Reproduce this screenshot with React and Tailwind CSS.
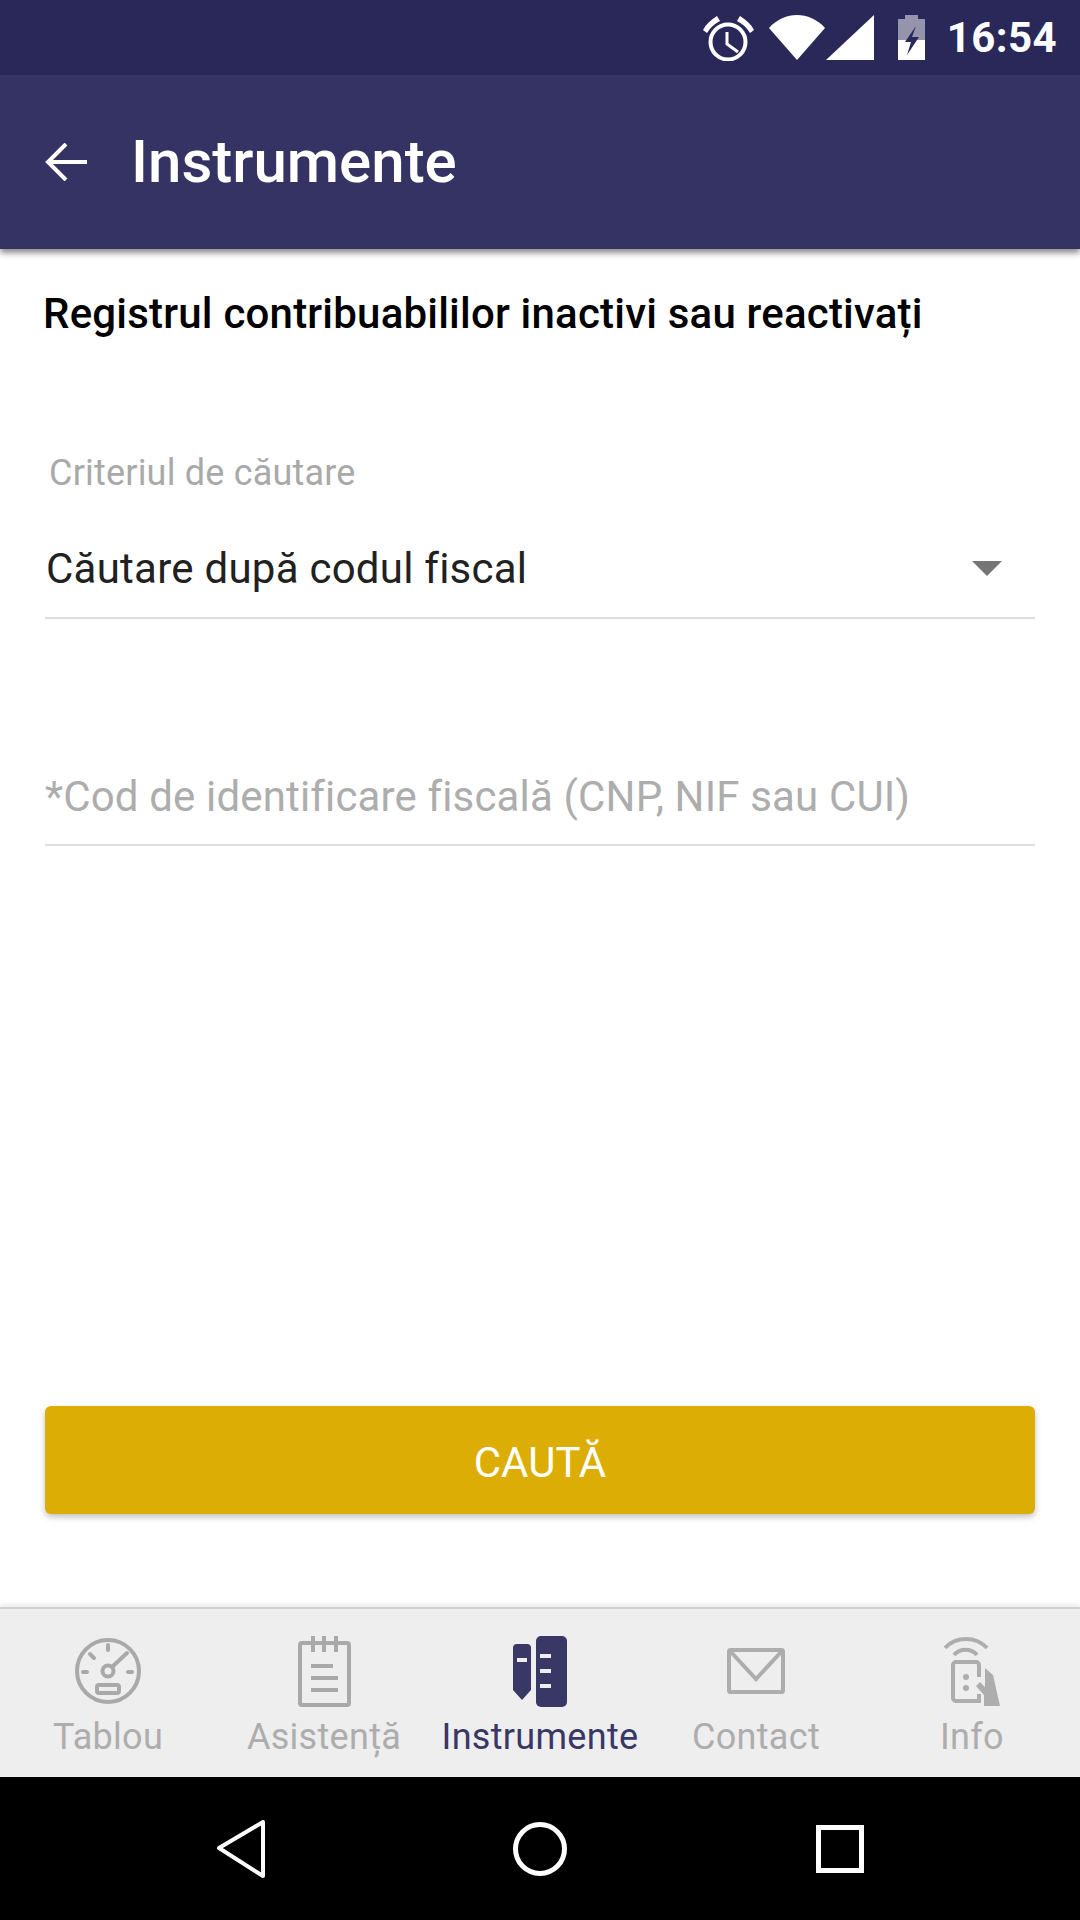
import React from 'react';

function AlarmIcon() {
  return (
    <svg width="51" height="46" viewBox="0 0 51 46" fill="none">
      <circle cx="25" cy="27" r="17.5" stroke="#fff" strokeWidth="4" />
      <path d="M24 17v12l11 8" stroke="#fff" strokeWidth="3" />
      <path d="M0 15C3 9 8 5 14 1l3 5C11 9 7 13 4 18z" fill="#fff" />
      <path d="M51 15C48 9 43 5 37 1l-3 5c6 3 10 7 13 12z" fill="#fff" />
    </svg>
  );
}

function WifiIcon() {
  return (
    <svg width="56" height="45" viewBox="0 0 56 45">
      <path d="M0 13C8 4 18 0 28 0s20 4 28 13L28 45z" fill="#fff" />
    </svg>
  );
}

function SignalIcon() {
  return (
    <svg width="48" height="45" viewBox="0 0 48 45">
      <path d="M0 45L48 0v45z" fill="#fff" />
    </svg>
  );
}

function BatteryIcon() {
  return (
    <svg width="27" height="45" viewBox="0 0 27 45">
      <path d="M0 4h7V0h13v4h7v21H0z" fill="#fff" fillOpacity="0.5" />
      <path d="M0 25h27v20H0z" fill="#fff" />
      <path d="M18 11L7 27h6L9 40l12-18h-7z" fill="#2a2859" />
    </svg>
  );
}

function GaugeIcon() {
  return (
    <svg width="68" height="68" viewBox="0 0 68 68" fill="none" stroke="#a9a9a9" strokeWidth="4">
      <circle cx="34" cy="34" r="31" />
      <circle cx="34" cy="34" r="5.5" />
      <path d="M38 30l15-14" strokeLinecap="round" />
      <path d="M34 8v5M16 17l4 4M9 35h4M54 35h4" strokeLinecap="round" />
      <rect x="23" y="48" width="22" height="8" rx="2" />
    </svg>
  );
}

function NotepadIcon() {
  return (
    <svg width="53" height="71" viewBox="0 0 53 71" fill="none" stroke="#a9a9a9" strokeWidth="4">
      <rect x="2" y="7" width="49" height="62" rx="2" />
      <path d="M15 0v16M26 0v16M38 0v16" />
      <path d="M13 30h22M13 42h27M13 54h27" />
    </svg>
  );
}

function ToolsIcon() {
  return (
    <svg width="54" height="71" viewBox="0 0 54 71">
      <path d="M4 8h10a4 4 0 014 4v42L9 64 0 54V12a4 4 0 014-4z" fill="#383766" />
      <rect x="23" y="0" width="31" height="71" rx="5" fill="#383766" />
      <path d="M4 22h10v4H4zM27 18h11v4H27zM27 33h11v4H27zM27 48h11v4H27z" fill="#eeeeee" />
    </svg>
  );
}

function MailIcon() {
  return (
    <svg width="58" height="46" viewBox="0 0 58 46" fill="none" stroke="#adadad" strokeWidth="4">
      <rect x="2" y="2" width="54" height="42" rx="1.5" />
      <path d="M3 3l26 28L55 3" />
    </svg>
  );
}

function InfoIcon() {
  return (
    <svg width="56" height="71" viewBox="0 0 56 71" fill="none" stroke="#adadad" strokeWidth="4">
      <path d="M1 12C12 0 32 0 43 12" />
      <path d="M10 19C16 12 27 12 33 19" />
      <path d="M35 41V29a3 3 0 00-3-3H12a3 3 0 00-3 3v33a3 3 0 003 3h23v-7" />
      <circle cx="22" cy="41" r="3" fill="#adadad" stroke="none" />
      <circle cx="22" cy="52" r="3" fill="#adadad" stroke="none" />
      <path d="M41 32l8 7 7 31H40V59l-8-9 4-4 5 5z" fill="#adadad" stroke="none" />
    </svg>
  );
}

function NavItem({ icon, label, active }) {
  return (
    <div className="flex-1 flex flex-col items-center">
      <div className="h-[72px] flex items-center justify-center">{icon}</div>
      <span className={`mt-[8px] text-[36px] leading-[44px] tracking-[0.3px] ${active ? 'text-[#383766]' : 'text-[#adadad]'}`}>{label}</span>
    </div>
  );
}

export default function App() {
  return (
    <div className="h-[1920px] w-[1080px] flex flex-col bg-white overflow-hidden font-['Roboto',sans-serif]">
      {/* status bar */}
      <div className="h-[75px] bg-[#2a2859] flex items-center justify-end pr-[23px]">
        <AlarmIcon />
        <div className="ml-[15px]"><WifiIcon /></div>
        <div className="ml-px"><SignalIcon /></div>
        <div className="ml-[24px]"><BatteryIcon /></div>
        <span className="ml-[22px] text-[42px] font-bold tracking-[0.4px] text-white leading-none">16:54</span>
      </div>

      {/* app bar */}
      <div className="relative h-[174px] bg-[#343364] flex items-center shadow-[0_4px_6px_rgba(0,0,0,0.45)]">
        <svg width="44" height="38" viewBox="0 0 44 38" fill="none" stroke="#fff" strokeWidth="4" className="ml-[45px]">
          <path d="M42 19H3M21 1L3 19l18 18" />
        </svg>
        <h1 className="ml-[42px] text-[60px] font-medium text-white leading-none">Instrumente</h1>
      </div>

      {/* form */}
      <div className="flex-1 flex flex-col px-[45px]">
        <h2 className="mt-[37px] -ml-[2px] text-[42px] leading-[56px] tracking-[0.2px] font-medium text-black">Registrul contribuabililor inactivi sau reactivați</h2>

        <label className="mt-[107px] ml-[4px] text-[36px] leading-[48px] tracking-[0.2px] text-[#a9a9a9]">Criteriul de căutare</label>
        <div className="mt-[40px] h-[82px] flex items-start justify-between border-b-2 border-[#dedede] pt-[4px]">
          <span className="ml-px text-[42px] leading-[56px] tracking-[0.25px] text-[#212121]">Căutare după codul fiscal</span>
          <span className="mt-[20px] mr-[33px] w-0 h-0 border-x-[15px] border-x-transparent border-t-[15px] border-t-[#757575]"></span>
        </div>

        <div className="mt-[134px] h-[93px] border-b-2 border-[#dedede] pt-[16px]">
          <span className="text-[42px] leading-[56px] tracking-[0.15px] text-[#adadad]">*Cod de identificare fiscală (CNP, NIF sau CUI)</span>
        </div>

        <button className="mt-auto mb-[93px] h-[108px] pt-[5px] rounded-[6px] bg-[#dcad05] text-white text-[42px] shadow-[0_3px_6px_rgba(0,0,0,0.25)]">CAUTĂ</button>
      </div>

      {/* bottom tabs */}
      <div className="h-[170px] bg-[#eeeeee] flex border-t-[2px] border-[#d0d0d0] pt-[26px] shadow-[0_-3px_5px_rgba(0,0,0,0.08)]">
        <NavItem icon={<GaugeIcon />} label="Tablou" />
        <NavItem icon={<NotepadIcon />} label="Asistență" />
        <NavItem icon={<ToolsIcon />} label="Instrumente" active />
        <NavItem icon={<MailIcon />} label="Contact" />
        <NavItem icon={<InfoIcon />} label="Info" />
      </div>

      {/* system nav */}
      <div className="h-[143px] bg-black flex items-center gap-[247px] pl-[216px]">
        <svg width="50" height="58" viewBox="0 0 50 58" fill="none" stroke="#fff" strokeWidth="4" strokeLinejoin="round">
          <path d="M47 2v54L3 28z" />
        </svg>
        <svg width="54" height="54" viewBox="0 0 54 54" fill="none" stroke="#fff" strokeWidth="5">
          <circle cx="27" cy="27" r="24.5" />
        </svg>
        <svg width="48" height="48" viewBox="0 0 48 48" fill="none" stroke="#fff" strokeWidth="5" className="ml-[2px]">
          <rect x="2.5" y="2.5" width="43" height="43" />
        </svg>
      </div>
    </div>
  );
}
